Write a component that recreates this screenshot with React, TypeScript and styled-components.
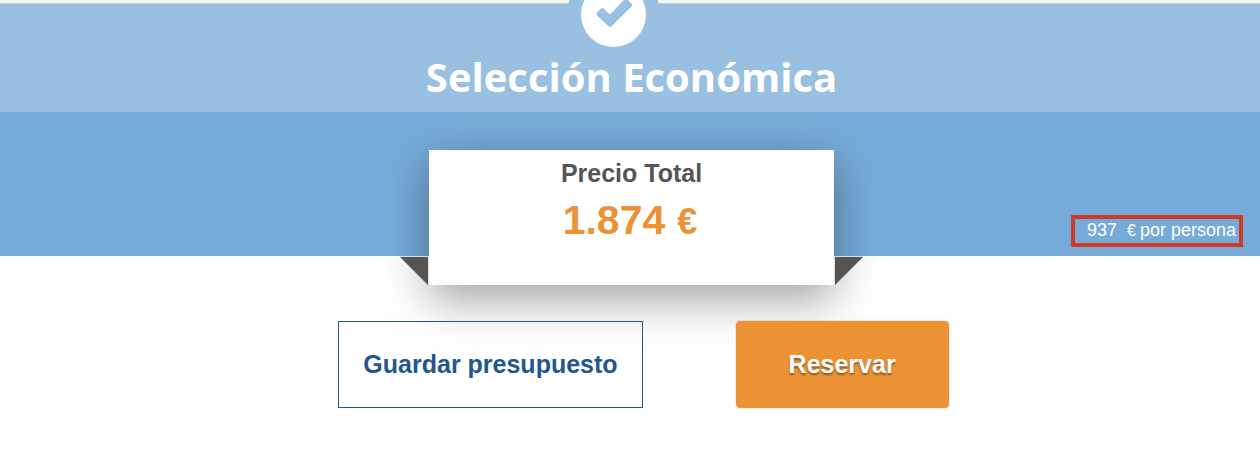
import React from "react";
import styled, { createGlobalStyle } from "styled-components";

const GlobalStyle = createGlobalStyle`
  * { box-sizing: border-box; }
  body {
    margin: 0;
    background: #fff;
    font-family: "Liberation Sans", Arial, sans-serif;
  }
`;

const Page = styled.main`
  border-top: 3px solid #f6f6f6;
`;

const TitleBand = styled.header`
  position: relative;
  display: flex;
  justify-content: center;
  padding: 46px 0 9px 3px;
  background: #99c0e0;
  border-top: 1px solid #c3cbd1;
`;

const Title = styled.h1`
  margin: 0;
  color: #fff;
  font: 700 40px/53px "Open Sans", "Noto Sans", sans-serif;
  text-align: center;
`;

const Badge = styled.svg`
  position: absolute;
  top: -36px;
  left: calc(50% - 63px);
  width: 93px;
  height: 93px;
`;

const PriceBand = styled.section`
  display: grid;
  grid-template-columns: minmax(0, 1fr) auto minmax(0, 1fr);
  padding: 38px 0 0 3px;
  background: #76abd9;
`;

const Card = styled.div`
  position: relative;
  grid-column: 2;
  width: 405px;
  margin-bottom: -29px;
  padding: 8px 0 36px;
  background: #fff;
  box-shadow: 0 14px 46px rgba(0, 0, 0, 0.38);
  text-align: center;
`;

const Fold = styled.svg<{ $side: "left" | "right" }>`
  position: absolute;
  bottom: 0;
  ${({ $side }) => ($side === "left" ? "right: 100%;" : "left: 100%;")}
  width: 29px;
  height: 29px;
  ${({ $side }) => $side === "right" && "transform: scaleX(-1);"}
`;

const CardLabel = styled.h2`
  margin: 0;
  color: #555;
  font-size: 25px;
  line-height: 30px;
`;

const Total = styled.p`
  display: flex;
  justify-content: center;
  align-items: baseline;
  gap: 12px;
  margin: 0;
  padding: 5px 3px 0 0;
  color: #ea9234;
  font-weight: 700;
  font-size: 41px;
  line-height: 54px;
`;

const Currency = styled.span`
  font-size: 36px;
`;

const PerPerson = styled.p`
  display: flex;
  align-items: baseline;
  align-self: end;
  justify-self: end;
  margin: 0 17px 9px 0;
  padding: 1px 3px 2px 12px;
  border: 4px solid #d13a22;
  color: #fff;
  font-size: 18px;
  line-height: 20px;
  white-space: nowrap;
`;

const SmallCurrency = styled.span`
  margin: 0 4px 0 10px;
  font-size: 16px;
`;

const Actions = styled.div`
  position: relative;
  display: flex;
  justify-content: center;
  gap: 93px;
  padding: 65px 0 46px 27px;
`;

const Button = styled.button<{ $primary?: boolean }>`
  padding: 0 ${({ $primary }) => ($primary ? 52 : 24)}px;
  border: ${({ $primary }) => ($primary ? "1px solid #ea9234" : "1px solid #22568f")};
  border-radius: ${({ $primary }) => ($primary ? 4 : 0)}px;
  background: ${({ $primary }) => ($primary ? "#ea9234" : "transparent")};
  box-shadow: ${({ $primary }) => ($primary ? "0 0 2px rgba(0, 0, 0, 0.25)" : "none")};
  color: ${({ $primary }) => ($primary ? "#fff" : "#22568f")};
  text-shadow: ${({ $primary }) => ($primary ? "0 2px 2px rgba(0, 0, 0, 0.4)" : "none")};
  font: 700 25px/85px "Liberation Sans", Arial, sans-serif;
  white-space: nowrap;
  cursor: pointer;
`;

function FoldCorner({ side }: { side: "left" | "right" }) {
  return (
    <Fold $side={side} viewBox="0 0 29 29" aria-hidden="true">
      <path d="M0 0H29V29H28V1H0Z" fill="#dedede" />
      <path d="M0 1H28V29Z" fill="#555" />
    </Fold>
  );
}

export default function App() {
  return (
    <>
      <GlobalStyle />
      <Page>
        <TitleBand>
          <Badge viewBox="0 0 93 93" aria-hidden="true">
            <circle cx="46.5" cy="46.5" r="46.5" fill="#99c0e0" />
            <circle cx="46.5" cy="46.5" r="32.5" fill="#fff" />
            <path
              d="M32 46L35.3 42.7L43 50L59 33.5L62.5 37L43 56.2Z"
              fill="#99c0e0"
              stroke="#99c0e0"
              strokeWidth="5"
              strokeLinejoin="round"
            />
          </Badge>
          <Title>Selección Económica</Title>
        </TitleBand>
        <PriceBand>
          <Card>
            <FoldCorner side="left" />
            <FoldCorner side="right" />
            <CardLabel>Precio Total</CardLabel>
            <Total>
              1.874 <Currency>€</Currency>
            </Total>
          </Card>
          <PerPerson>
            937 <SmallCurrency>€</SmallCurrency> por persona
          </PerPerson>
        </PriceBand>
        <Actions>
          <Button type="button">Guardar presupuesto</Button>
          <Button type="button" $primary>
            Reservar
          </Button>
        </Actions>
      </Page>
    </>
  );
}
